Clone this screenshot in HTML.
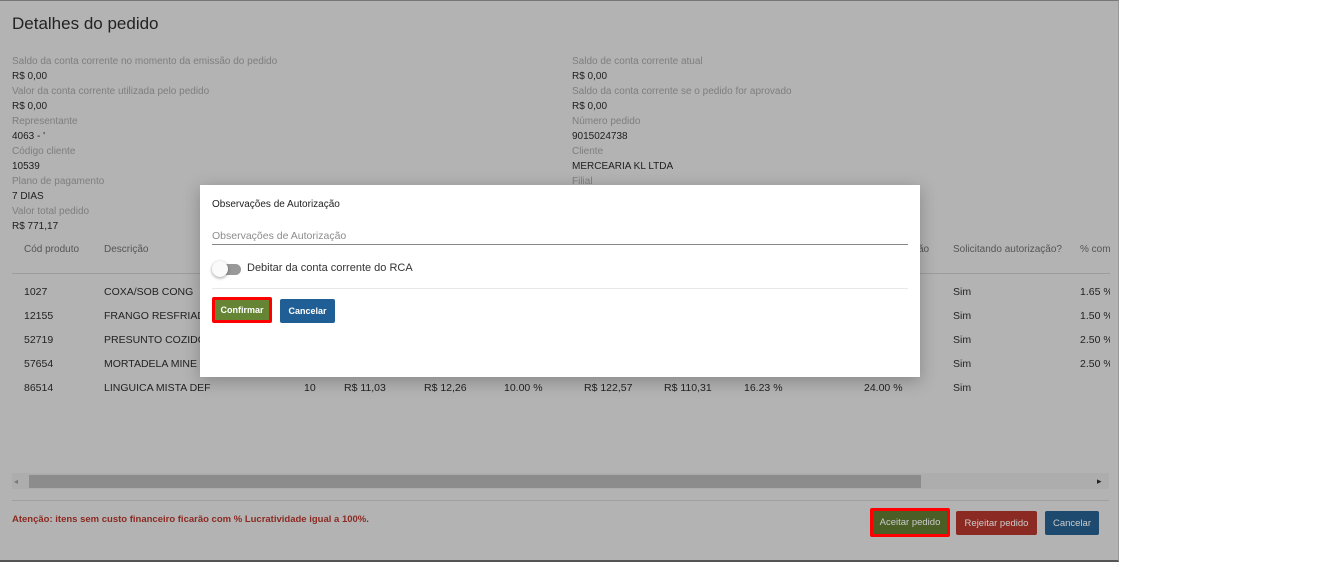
<!DOCTYPE html>
<html><head><meta charset="utf-8"><style>
*{box-sizing:border-box;margin:0;padding:0}
body{width:1342px;height:562px;background:#fff;font-family:"Liberation Sans",sans-serif;position:relative;overflow:hidden}
.bg{position:absolute;left:0;top:0;width:1119px;height:562px;background:#b3b3b3;border-top:1px solid #777;border-right:1px solid #999;border-bottom:2px solid #555}
.a{position:absolute;white-space:nowrap}
.l{font-size:10px;color:#7e7e7e}
.v{font-size:10px;color:#1e1e1e}
.t{font-size:10.5px;color:#222}
.h{font-size:10px;color:#555}
.btn{position:absolute;color:#fff;font-size:9.5px;display:flex;align-items:center;justify-content:center;border-radius:2px}
</style></head><body>
<div class="bg"></div>
<div class="a" style="left:12px;top:14px;font-size:17px;color:#222">Detalhes do pedido</div>
<div class="a l" style="left:12px;top:56px">Saldo da conta corrente no momento da emissão do pedido</div>
<div class="a v" style="left:12px;top:71px">R$ 0,00</div>
<div class="a l" style="left:12px;top:86px">Valor da conta corrente utilizada pelo pedido</div>
<div class="a v" style="left:12px;top:101px">R$ 0,00</div>
<div class="a l" style="left:12px;top:116px">Representante</div>
<div class="a v" style="left:12px;top:131px">4063 - '</div>
<div class="a l" style="left:12px;top:146px">Código cliente</div>
<div class="a v" style="left:12px;top:161px">10539</div>
<div class="a l" style="left:12px;top:176px">Plano de pagamento</div>
<div class="a v" style="left:12px;top:191px">7 DIAS</div>
<div class="a l" style="left:12px;top:206px">Valor total pedido</div>
<div class="a v" style="left:12px;top:221px">R$ 771,17</div>
<div class="a l" style="left:572px;top:56px">Saldo de conta corrente atual</div>
<div class="a v" style="left:572px;top:71px">R$ 0,00</div>
<div class="a l" style="left:572px;top:86px">Saldo da conta corrente se o pedido for aprovado</div>
<div class="a v" style="left:572px;top:101px">R$ 0,00</div>
<div class="a l" style="left:572px;top:116px">Número pedido</div>
<div class="a v" style="left:572px;top:131px">9015024738</div>
<div class="a l" style="left:572px;top:146px">Cliente</div>
<div class="a v" style="left:572px;top:161px">MERCEARIA KL LTDA</div>
<div class="a l" style="left:572px;top:176px">Filial</div>
<div class="a h" style="left:24px;top:244px">Cód produto</div>
<div class="a h" style="left:104px;top:244px">Descrição</div>
<div class="a h" style="left:913px;top:244px">ção</div>
<div class="a h" style="left:953px;top:244px">Solicitando autorização?</div>
<div class="a h" style="left:1080px;top:244px">% com</div>
<div class="a" style="left:12px;top:273px;width:1098px;height:1px;background:#9c9c9c"></div>
<div class="a t" style="left:24px;top:286px">1027</div><div class="a t" style="left:104px;top:286px">COXA/SOB CONG</div><div class="a t" style="left:953px;top:286px">Sim</div><div class="a t" style="left:1080px;top:286px">1.65 %</div>
<div class="a t" style="left:24px;top:310px">12155</div><div class="a t" style="left:104px;top:310px">FRANGO RESFRIAD</div><div class="a t" style="left:953px;top:310px">Sim</div><div class="a t" style="left:1080px;top:310px">1.50 %</div>
<div class="a t" style="left:24px;top:334px">52719</div><div class="a t" style="left:104px;top:334px">PRESUNTO COZIDO</div><div class="a t" style="left:953px;top:334px">Sim</div><div class="a t" style="left:1080px;top:334px">2.50 %</div>
<div class="a t" style="left:24px;top:358px">57654</div><div class="a t" style="left:104px;top:358px">MORTADELA MINE</div><div class="a t" style="left:953px;top:358px">Sim</div><div class="a t" style="left:1080px;top:358px">2.50 %</div>
<div class="a t" style="left:24px;top:382px">86514</div><div class="a t" style="left:104px;top:382px">LINGUICA MISTA DEF</div><div class="a t" style="left:304px;top:382px">10</div><div class="a t" style="left:344px;top:382px">R$ 11,03</div><div class="a t" style="left:424px;top:382px">R$ 12,26</div><div class="a t" style="left:504px;top:382px">10.00 %</div><div class="a t" style="left:584px;top:382px">R$ 122,57</div><div class="a t" style="left:664px;top:382px">R$ 110,31</div><div class="a t" style="left:744px;top:382px">16.23 %</div><div class="a t" style="left:864px;top:382px">24.00 %</div><div class="a t" style="left:953px;top:382px">Sim</div>
<div class="a" style="left:1110px;top:230px;width:8px;height:170px;background:#b3b3b3"></div>
<div class="a" style="left:12px;top:473px;width:1097px;height:16px;background:#adadad"></div>
<div class="a" style="left:29px;top:475px;width:892px;height:13px;background:#8c8c8c"></div>
<div class="a" style="left:14px;top:477px;font-size:8px;color:#777">◂</div>
<div class="a" style="left:1097px;top:476px;font-size:9px;color:#222">▸</div>
<div class="a" style="left:12px;top:500px;width:1097px;height:1px;background:#a0a0a0"></div>
<div class="a" style="left:12px;top:514px;font-size:9.5px;font-weight:bold;color:#8b2a22">Atenção: itens sem custo financeiro ficarão com % Lucratividade igual a 100%.</div>
<div class="btn" style="left:870px;top:508px;width:80px;height:29px;background:#4a5e26;border:3px solid #f00;color:#ccc">Aceitar pedido</div>
<div class="btn" style="left:956px;top:511px;width:81px;height:24px;background:#8a2a22;color:#ccc">Rejeitar pedido</div>
<div class="btn" style="left:1045px;top:511px;width:54px;height:24px;background:#1d4a6e;color:#ccc">Cancelar</div>
<div class="a" style="left:200px;top:185px;width:720px;height:192px;background:#fff;box-shadow:0 4px 16px rgba(0,0,0,.25)">
<div class="a" style="left:12px;top:14px;font-size:10px;color:#222">Observações de Autorização</div>
<div class="a" style="left:12px;top:45px;font-size:10.5px;color:#8c8c8c">Observações de Autorização</div>
<div class="a" style="left:12px;top:59px;width:696px;height:1px;background:#888"></div>
<div class="a" style="left:14px;top:79px;width:27px;height:11px;border-radius:6px;background:#999"></div>
<div class="a" style="left:12px;top:76px;width:16px;height:16px;border-radius:50%;background:#fafafa;box-shadow:0 1px 3px rgba(0,0,0,.4)"></div>
<div class="a" style="left:47px;top:77px;font-size:11px;color:#333">Debitar da conta corrente do RCA</div>
<div class="a" style="left:12px;top:103px;width:696px;height:1px;background:#e8e8e8"></div>
<div class="btn" style="left:12px;top:112px;width:60px;height:26px;background:#658535;border:3px solid #f00;font-weight:bold;font-size:9px">Confirmar</div>
<div class="btn" style="left:80px;top:114px;width:55px;height:24px;background:#1f5f96;font-weight:bold;font-size:9px">Cancelar</div>
</div>
</body></html>
